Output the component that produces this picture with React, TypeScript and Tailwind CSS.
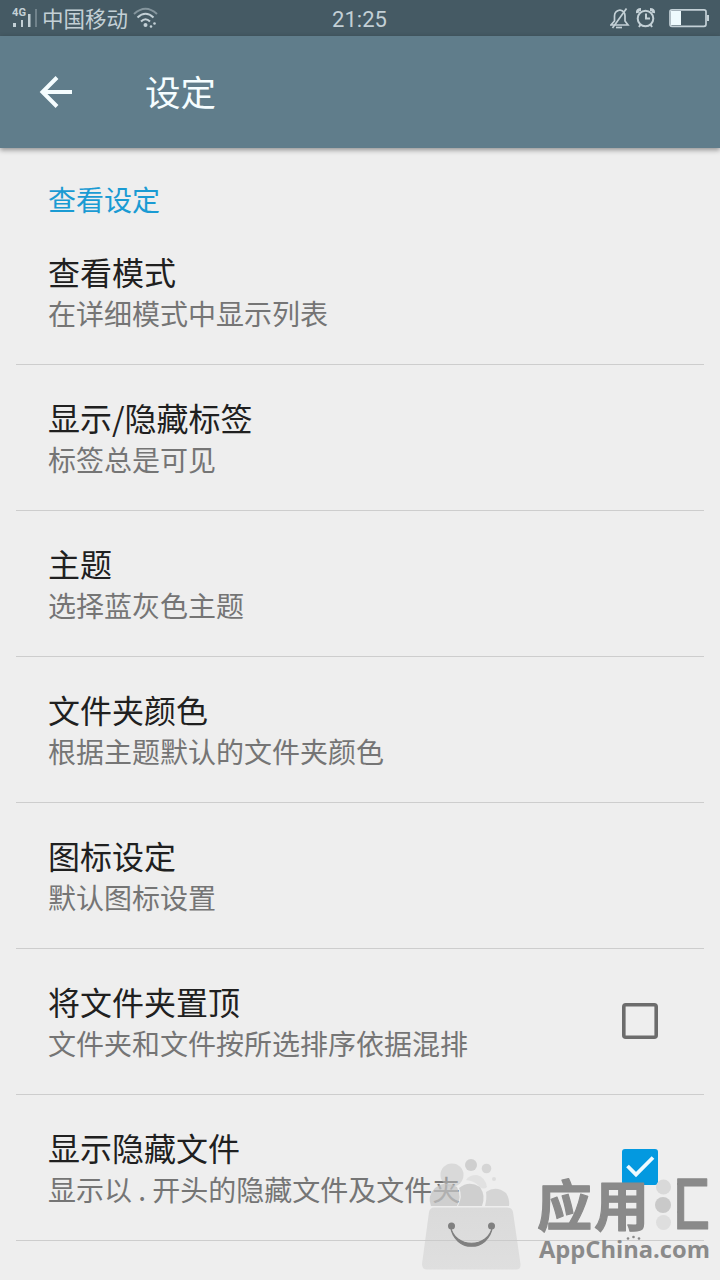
import { useState } from 'react';

const settings = [
  { title: '查看模式', summary: '在详细模式中显示列表' },
  { title: '显示/隐藏标签', summary: '标签总是可见' },
  { title: '主题', summary: '选择蓝灰色主题' },
  { title: '文件夹颜色', summary: '根据主题默认的文件夹颜色' },
  { title: '图标设定', summary: '默认图标设置' },
  { title: '将文件夹置顶', summary: '文件夹和文件按所选排序依据混排', checked: false },
  { title: '显示隐藏文件', summary: '显示以 . 开头的隐藏文件及文件夹', checked: true },
];

const StatusBar = () => (
  <div className="h-9 shrink-0 bg-[#455a64] flex items-center justify-between pl-3 pr-[10px] text-[#c3d0d6]">
    <div className="flex w-[308px] items-center">
      <svg width="29" height="36" viewBox="0 0 29 36" fill="currentColor">
        <text x="0" y="16" fontSize="10.500" fontWeight="700" fontFamily="Roboto, sans-serif" textLength="14" lengthAdjust="spacingAndGlyphs">4G</text>
        <rect x="1" y="23" width="3" height="4" />
        <rect x="9" y="20" width="2" height="7" />
        <rect x="16" y="14" width="2.500" height="13" />
        <rect x="23" y="9" width="2" height="18" opacity="0.35" />
      </svg>
      <span className="ml-[1px] text-[21.5px] leading-9">中国移动</span>
      <svg className="ml-[5px]" width="26" height="36" viewBox="0 0 26 36" fill="none" stroke="currentColor" strokeWidth="2">
        <path d="M1 14 Q12.500 3.500 24 14" opacity="0.5" />
        <path d="M4.500 17.500 Q12.500 10 20.500 17.500" />
        <path d="M8 21.500 Q12.500 17 17 21.500" />
        <circle cx="12.500" cy="25" r="2" fill="currentColor" stroke="none" />
        <circle cx="21.500" cy="23.500" r="1.300" fill="currentColor" stroke="none" />
        <circle cx="18" cy="26.500" r="1.300" fill="currentColor" stroke="none" />
      </svg>
    </div>
    <span className="w-[80px] pr-[3px] text-center font-['Roboto'] text-[22px] leading-9 pt-[3px]">21:25</span>
    <div className="flex w-[308px] items-center justify-end">
      <svg width="20" height="36" viewBox="0 0 20 36" fill="none" stroke="currentColor" strokeWidth="1.700">
        <path d="M1 25 H18 L15 21 V16 Q15 11 10 10 Q4.500 11 4.500 16 V21 Z" />
        <path d="M6 27.500 H12" />
        <path d="M16.500 8.500 L2.500 28" />
      </svg>
      <svg className="ml-[6px]" width="20" height="36" viewBox="0 0 20 36" fill="none" stroke="currentColor" strokeWidth="2">
        <circle cx="9.500" cy="18.500" r="7.800" />
        <path d="M10 13.500 V18.500 H14" />
        <path d="M1.500 13 Q1 9.500 5 9.500 M17.500 13 Q18 9.500 14 9.500" strokeWidth="3" />
        <path d="M4.500 24.500 L3 27 M14.500 24.500 L16 27" />
      </svg>
      <svg className="ml-[13px]" width="41" height="36" viewBox="0 0 41 36">
        <rect x="1" y="9.800" width="36" height="16.500" rx="2" fill="none" stroke="currentColor" strokeWidth="1.700" />
        <rect x="2" y="11" width="10" height="14" fill="#eefafd" />
        <rect x="38" y="15" width="2" height="6" fill="currentColor" />
      </svg>
    </div>
  </div>
);

const Checkbox = ({ checked }: { checked: boolean }) => (
  <svg className="mt-[54px]" width="36" height="36" viewBox="0 0 36 36" fill="none">
    {checked ? (
      <>
        <rect width="36" height="36" rx="3" fill="#0399e0" />
        <path d="M5.500 17 L14 25.500 L31 8.500" stroke="#eefaff" strokeWidth="3.800" />
      </>
    ) : (
      <rect x="1.800" y="1.800" width="32.400" height="32.400" rx="2" stroke="#6c6c6c" strokeWidth="3.600" />
    )}
  </svg>
);

const Watermark = () => (
  <svg
    className="pointer-events-none absolute bottom-0 right-0"
    width="320"
    height="130"
    viewBox="400 1150 320 130"
    aria-label="应用汇 AppChina.com"
  >
    <defs>
      <linearGradient id="bag" x1="0" y1="0" x2="0" y2="1">
        <stop offset="0" stopColor="#dadada" />
        <stop offset="1" stopColor="#dfdfdf" />
      </linearGradient>
      <clipPath id="frame">
        <rect x="677" y="1170" width="43" height="70" />
      </clipPath>
    </defs>
    <g fill="#c4c4c4" fillOpacity="0.75">
      <circle cx="452" cy="1175" r="11.500" fillOpacity="0.5" />
      <circle cx="471" cy="1165" r="6" />
      <circle cx="486.500" cy="1168.500" r="4.800" fillOpacity="0.6" />
      <circle cx="494" cy="1179" r="2" fillOpacity="0.4" />
      <path d="M466 1180 Q469 1175 477 1175 Q485 1177 487 1187 Q483 1190 480 1187 Q475 1181 466 1180 Z" fillOpacity="0.3" />
      <path d="M431 1206 Q427 1196 435 1188 Q445 1180 457 1187 Q462 1197 457 1206 Z" />
      <path d="M458 1206 Q463 1196 459 1188 Q469 1180 480 1187 Q486 1196 482 1206 Z" />
      <path d="M485 1206 Q487 1198 486 1192 Q496 1185 506 1193 Q510 1199 509 1206 Z" fillOpacity="0.6" />
    </g>
    <path d="M434 1207.500 H507 Q512 1207.500 513 1212 L520.500 1264 Q521 1269.500 516 1269.500 H427 Q422 1269.500 422 1264 L429 1212 Q430 1207.500 434 1207.500 Z" fill="url(#bag)" />
    <path d="M424 1240.500 H518" stroke="#cbcbcb" />
    <path d="M450.500 1226 C454 1249 489 1249 492.500 1226 C489 1253 454 1253 450.500 1226 Z" fill="#808080" stroke="#808080" strokeWidth="1.200" />
    <circle cx="451.500" cy="1226" r="3.500" fill="#808080" />
    <circle cx="491.500" cy="1226" r="3.500" fill="#808080" />
    <circle cx="663.500" cy="1187" r="7.500" fill="#d9d9d9" />
    <circle cx="663" cy="1205" r="8" fill="#c9c9c9" />
    <circle cx="663.500" cy="1222.500" r="7.500" fill="#dedede" />
    <g fill="#8a8a8a" fontWeight="700">
      <g fontFamily="'Noto Sans CJK SC', sans-serif" fontSize="55" stroke="#8a8a8a" strokeWidth="1.200" strokeLinejoin="round">
        <text x="537" y="1225.500">应</text>
        <text x="594" y="1225.500">用</text>
        <g clipPath="url(#frame)">
          <text transform="translate(661.500 1226) scale(0.87 1.07)">汇</text>
        </g>
      </g>
      <text x="539" y="1257.500" fontFamily="'Open Sans', sans-serif" fontSize="22.500" textLength="171" lengthAdjust="spacingAndGlyphs">AppChina.com</text>
      <circle cx="628" cy="1238.500" r="1.300" />
      <circle cx="633.500" cy="1237" r="1.300" />
      <circle cx="639" cy="1238.500" r="1.300" />
    </g>
  </svg>
);

const App = () => {
  const [items, setItems] = useState(settings);

  const toggle = (title: string) =>
    setItems(items.map((item) => (item.title === title && item.checked !== undefined ? { ...item, checked: !item.checked } : item)));

  return (
    <div className="relative flex h-[1280px] w-[720px] flex-col overflow-hidden bg-[#eeeeee] font-['Noto_Sans_CJK_SC',sans-serif]">
      <StatusBar />

      <header className="z-10 flex h-28 shrink-0 items-center bg-[#607d8b] pl-[38px] text-[#f5fdff] shadow-[0_2px_5px_rgba(0,0,0,0.4)]">
        <svg width="36" height="36" viewBox="0 0 36 36" fill="none" stroke="currentColor" strokeWidth="4">
          <path d="M34 18 H5 M19 3.500 L4.500 18 L19 32.500" />
        </svg>
        <h1 className="ml-[71px] pb-[2px] text-[35.5px] leading-[44px]">设定</h1>
      </header>

      <main className="flex flex-col px-4">
        <h2 className="h-[71px] px-8 pt-[35px] text-[28px] leading-8 text-[#1a9bd3]">查看设定</h2>
        {items.map((item) => (
          <div
            key={item.title}
            className="flex h-[146px] items-start justify-between border-b border-[#cdcdcd] pl-8 pr-[46px]"
            onClick={() => toggle(item.title)}
          >
            <div className="pt-[31px]">
              <p className="text-[32px] leading-[42px] text-[#202020]">{item.title}</p>
              <p className="mt-[2px] text-[28px] leading-[39px] text-[#757575]">{item.summary}</p>
            </div>
            {item.checked !== undefined && <Checkbox checked={item.checked} />}
          </div>
        ))}
      </main>

      <Watermark />
    </div>
  );
};

export default App;
